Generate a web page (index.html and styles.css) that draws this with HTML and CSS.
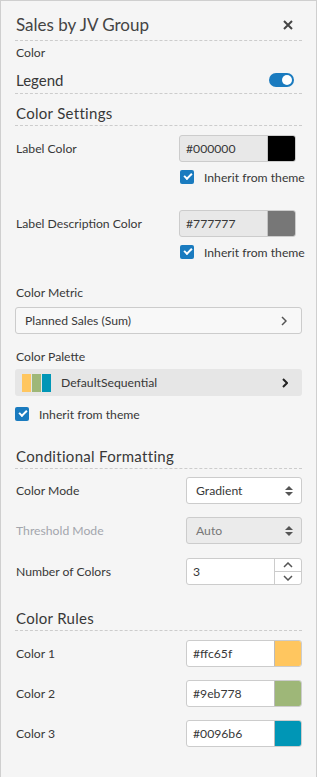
FILE: index.html
```html
<!DOCTYPE html>
<html><head><meta charset="UTF-8">
<title>Sales by JV Group</title>
<link rel="stylesheet" href="styles.css">
</head>
<body>
<div class="panel">
  <div class="head">
    <span class="title">Sales by JV Group</span>
    <svg class="close" width="12" height="12" viewBox="0 0 12 12"><path d="M2 2L10 10M10 2L2 10" stroke="#444" stroke-width="2"/></svg>
  </div>
  <div class="sub">Color</div>
  <div class="legend">
    <span>Legend</span>
    <span class="toggle"><span class="knob"></span></span>
  </div>
  <div class="sect s1">Color Settings</div>

  <div class="row r-label">
    <span>Label Color</span>
    <span class="color dis"><span class="hex">#000000</span><span class="sw" style="background:#000000"></span></span>
  </div>
  <div class="inherit right"><span class="cb"></span><span>Inherit from theme</span></div>

  <div class="row r-desc">
    <span>Label Description Color</span>
    <span class="color dis"><span class="hex">#777777</span><span class="sw" style="background:#777777"></span></span>
  </div>
  <div class="inherit right"><span class="cb"></span><span>Inherit from theme</span></div>

  <div class="lbl l-metric">Color Metric</div>
  <div class="select-wide"><span>Planned Sales (Sum)</span>
    <svg width="6" height="10" viewBox="0 0 6 10"><path d="M1 1L5 5L1 9" fill="none" stroke="#555" stroke-width="1.5"/></svg>
  </div>

  <div class="lbl l-pal">Color Palette</div>
  <div class="palette">
    <span class="pal-sw" style="background:#ffc65f"></span><span class="pal-sw" style="background:#9eb778"></span><span class="pal-sw" style="background:#0096b6"></span>
    <span class="pal-name">DefaultSequential</span>
    <svg width="6" height="10" viewBox="0 0 6 10"><path d="M1 1L5 5L1 9" fill="none" stroke="#222" stroke-width="2"/></svg>
  </div>
  <div class="inherit left"><span class="cb"></span><span>Inherit from theme</span></div>

  <div class="sect s2">Conditional Formatting</div>
  <div class="row r-mode">
    <span>Color Mode</span>
    <span class="sel"><span>Gradient</span><span class="ud"></span></span>
  </div>
  <div class="row r-thr off">
    <span>Threshold Mode</span>
    <span class="sel dis"><span>Auto</span><span class="ud"></span></span>
  </div>
  <div class="row r-num">
    <span>Number of Colors</span>
    <span class="num"><span class="val">3</span><span class="spin">
      <span class="up"><svg width="10" height="6" viewBox="0 0 10 6"><path d="M1 5L5 1L9 5" fill="none" stroke="#555" stroke-width="1.5"/></svg></span>
      <span class="down"><svg width="10" height="6" viewBox="0 0 10 6"><path d="M1 1L5 5L9 1" fill="none" stroke="#555" stroke-width="1.5"/></svg></span>
    </span></span>
  </div>

  <div class="sect s3">Color Rules</div>
  <div class="row r-c1">
    <span>Color 1</span>
    <span class="color rule"><span class="hex">#ffc65f</span><span class="sw" style="background:#ffc65f"></span></span>
  </div>
  <div class="row r-c2">
    <span>Color 2</span>
    <span class="color rule"><span class="hex">#9eb778</span><span class="sw" style="background:#9eb778"></span></span>
  </div>
  <div class="row r-c3">
    <span>Color 3</span>
    <span class="color rule"><span class="hex">#0096b6</span><span class="sw" style="background:#0096b6"></span></span>
  </div>
</div>
</body>
</html>
```

FILE: styles.css
```css
html,body{margin:0;padding:0;background:#f5f5f5;}
body{font:12.2px "Lato","Noto Sans",sans-serif;color:#383838;}
.panel{box-sizing:border-box;min-height:777px;border:1px solid #cfcfcf;border-bottom:none;background:#f5f5f5;padding:0 14px 0 14px;}
.head{display:flex;justify-content:space-between;align-items:center;padding:13px 0 4px 1px;line-height:22px;border-bottom:1px dashed #cccccc;}
.title{font-size:17px;color:#444;}
.close{margin-right:8px;}
.sub{padding:3px 0 0 1px;line-height:18px;}
.legend{display:flex;justify-content:space-between;align-items:center;padding:7px 0 2px 1px;line-height:22px;font-size:15px;border-bottom:1px dashed #cccccc;}
.toggle{position:relative;width:25px;height:14px;border-radius:7px;background:#1a7bbf;margin-right:8px;}
.knob{position:absolute;right:2px;top:2px;width:10px;height:10px;border-radius:50%;background:#fff;}
.sect{padding:8px 0 1px 1px;line-height:22px;font-size:15px;letter-spacing:.3px;border-bottom:1px dashed #cccccc;}
.s2{margin-top:15px;}
.s3{margin-top:14px;}
.row{display:flex;justify-content:space-between;align-items:center;height:27px;padding-left:1px;white-space:nowrap;}
.r-label{margin-top:9px;}
.r-desc{margin-top:25px;}
.r-mode{margin-top:8px;}
.r-thr{margin-top:13px;}
.r-num{margin-top:14px;}
.r-c1{margin-top:9px;}
.r-c2,.r-c3{margin-top:13px;}
.off{color:#a3a6ad;}
.color{display:flex;box-sizing:border-box;width:117px;height:27px;border:1px solid #cccccc;border-radius:3px;overflow:hidden;}
.color .hex{flex:1;padding-left:6px;line-height:25px;}
.color .sw{width:27px;border-left:1px solid #bbbbbb;}
.dis{background:#e8e8e8;margin-right:6px;}
.dis .sw{border-left-color:#c4c4c4;}
.rule{width:116px;background:#fff;}
.rule .sw{width:26px;}
.inherit{display:flex;align-items:center;height:16px;white-space:nowrap;}
.inherit.right{margin-top:7px;padding-left:165px;}
.inherit.left{margin-top:10px;}
.cb{position:relative;width:14px;height:14px;border-radius:2px;background:#1a7bbf;margin-right:10px;flex:none;}
.cb:after{content:"";position:absolute;left:4px;top:3px;width:6px;height:3px;border-left:2px solid #fff;border-bottom:2px solid #fff;transform:rotate(-45deg);}
.lbl{padding-left:1px;line-height:18px;}
.l-metric{margin-top:24px;}
.l-pal{margin-top:14px;}
.select-wide{display:flex;justify-content:space-between;align-items:center;box-sizing:border-box;height:27px;margin-top:5px;border:1px solid #cccccc;border-radius:3px;background:#f8f8f8;padding:0 14px 0 9px;}
.palette{display:flex;align-items:center;box-sizing:border-box;height:27px;margin-top:3px;border-radius:3px;background:#e6e6e6;padding:0 14px 0 7px;}
.pal-sw{width:9px;height:18px;margin-right:1px;}
.pal-name{flex:1;margin-left:9px;}
.sel{display:flex;justify-content:space-between;align-items:center;box-sizing:border-box;width:116px;height:27px;border:1px solid #cccccc;border-radius:3px;background:#fff;padding:0 8px 0 9px;color:#383838;}
.sel.dis{background:#ebebeb;margin-right:0;color:#777;}
.ud{position:relative;width:8px;height:10px;}
.ud:before,.ud:after{content:"";position:absolute;left:0;border-left:4px solid transparent;border-right:4px solid transparent;}
.ud:before{top:0;border-bottom:4px solid #555;}
.ud:after{bottom:0;border-top:4px solid #555;}
.num{display:flex;box-sizing:border-box;width:116px;height:27px;border:1px solid #cccccc;border-radius:3px;background:#fff;}
.num .val{flex:1;padding-left:6px;line-height:25px;}
.spin{display:flex;flex-direction:column;width:26px;border-left:1px solid #cccccc;}
.spin span{flex:1;display:flex;align-items:center;justify-content:center;}
.spin .up{border-bottom:1px solid #cccccc;}
```
